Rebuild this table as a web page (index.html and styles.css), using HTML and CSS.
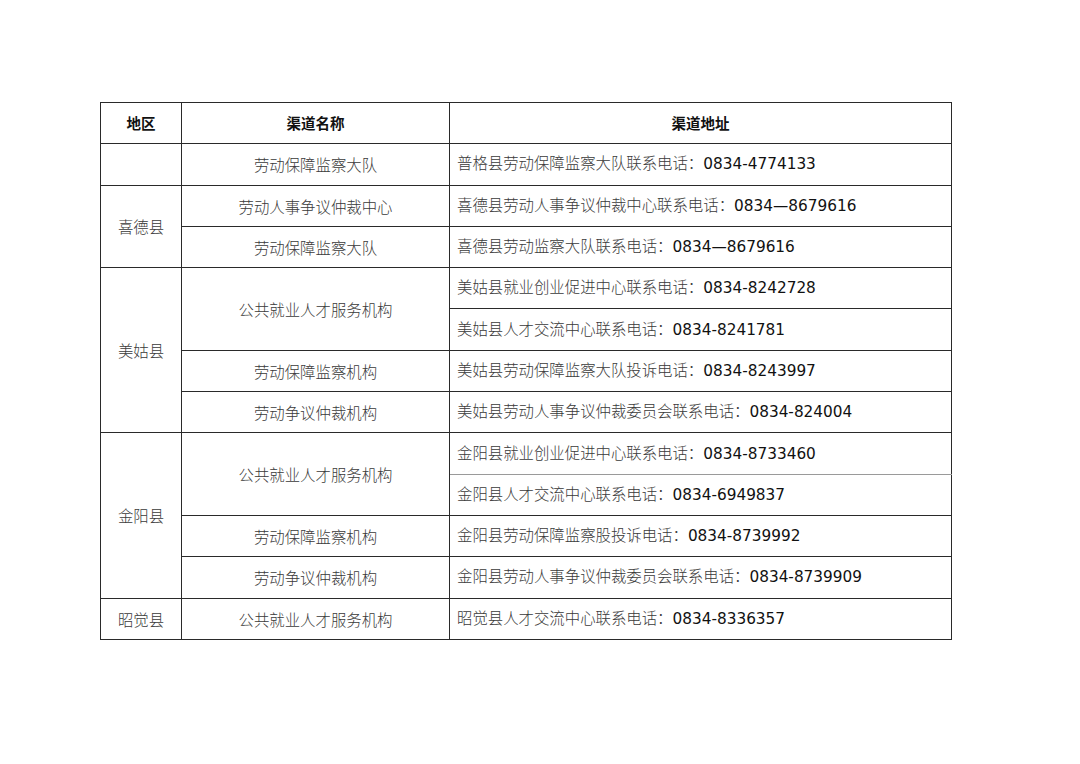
FILE: index.html
```html
<!DOCTYPE html>
<html lang="zh">
<head>
<meta charset="utf-8">
<link rel="stylesheet" href="styles.css">
</head>
<body>
<table class="grid">
  <colgroup>
    <col class="c1"><col class="c2"><col class="c3">
  </colgroup>
  <thead>
    <tr><th>地区</th><th>渠道名称</th><th>渠道地址</th></tr>
  </thead>
  <tbody>
    <tr><td></td><td class="mid">劳动保障监察大队</td><td class="addr">普格县劳动保障监察大队联系电话：<span class="num">0834-4774133</span></td></tr>
    <tr><td rowspan="2" class="mid">喜德县</td><td class="mid">劳动人事争议仲裁中心</td><td class="addr">喜德县劳动人事争议仲裁中心联系电话：<span class="num">0834—8679616</span></td></tr>
    <tr><td class="mid">劳动保障监察大队</td><td class="addr">喜德县劳动监察大队联系电话：<span class="num">0834—8679616</span></td></tr>
    <tr><td rowspan="4" class="mid">美姑县</td><td rowspan="2" class="mid">公共就业人才服务机构</td><td class="addr">美姑县就业创业促进中心联系电话：<span class="num">0834-8242728</span></td></tr>
    <tr><td class="addr">美姑县人才交流中心联系电话：<span class="num">0834-8241781</span></td></tr>
    <tr><td class="mid">劳动保障监察机构</td><td class="addr">美姑县劳动保障监察大队投诉电话：<span class="num">0834-8243997</span></td></tr>
    <tr><td class="mid">劳动争议仲裁机构</td><td class="addr">美姑县劳动人事争议仲裁委员会联系电话：<span class="num">0834-824004</span></td></tr>
    <tr><td rowspan="4" class="mid">金阳县</td><td rowspan="2" class="mid">公共就业人才服务机构</td><td class="addr soft-b">金阳县就业创业促进中心联系电话：<span class="num">0834-8733460</span></td></tr>
    <tr><td class="addr soft-t">金阳县人才交流中心联系电话：<span class="num">0834-6949837</span></td></tr>
    <tr><td class="mid">劳动保障监察机构</td><td class="addr">金阳县劳动保障监察股投诉电话：<span class="num">0834-8739992</span></td></tr>
    <tr><td class="mid">劳动争议仲裁机构</td><td class="addr">金阳县劳动人事争议仲裁委员会联系电话：<span class="num">0834-8739909</span></td></tr>
    <tr><td class="mid">昭觉县</td><td class="mid">公共就业人才服务机构</td><td class="addr">昭觉县人才交流中心联系电话：<span class="num">0834-8336357</span></td></tr>
  </tbody>
</table>
</body>
</html>
```

FILE: styles.css
```css
html, body {
  margin: 0;
  padding: 0;
  background: #ffffff;
}
body {
  font-family: "DejaVu Sans", "Noto Sans CJK SC", sans-serif;
  color: #3a3a3a;
}
.grid {
  margin: 102px 0 0 100px;
  border-collapse: collapse;
  table-layout: fixed;
  width: 851px;
  border: 1px solid #222;
}
.c1 { width: 81px; }
.c2 { width: 268px; }
.c3 { width: 502px; }
.grid th, .grid td {
  border: 1px solid #2a2a2a;
  height: 40.3px;
  padding: 0;
  font-size: 15.4px;
  line-height: 20px;
  vertical-align: middle;
}
.grid th {
  font-family: "Noto Sans CJK SC", sans-serif;
  font-weight: 700;
  color: #111;
  font-size: 14.5px;
  text-align: center;
}
.mid {
  text-align: center;
  font-family: "Noto Sans CJK SC", sans-serif;
  font-weight: 300;
}
.addr {
  padding-left: 7px !important;
  text-align: left;
  font-weight: 300;
  white-space: nowrap;
}
.num {
  font-family: "DejaVu Sans", sans-serif;
  font-weight: 400;
  font-size: 15.3px;
  color: #111;
}
.grid td.soft-b { border-bottom-color: #9a9a9a; }
.grid td.soft-t { border-top-color: #9a9a9a; }
```
